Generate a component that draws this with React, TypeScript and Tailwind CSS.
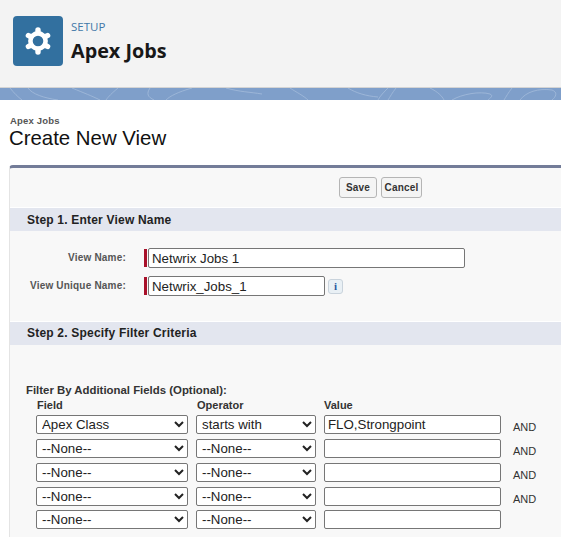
const ARIAL = "font-['Liberation_Sans',Arial,sans-serif]";

const ROWS = [
  { field: "Apex Class", op: "starts with", value: "FLO,Strongpoint", and: true },
  { field: "--None--", op: "--None--", value: "", and: true },
  { field: "--None--", op: "--None--", value: "", and: true },
  { field: "--None--", op: "--None--", value: "", and: true },
  { field: "--None--", op: "--None--", value: "", and: false },
];

function Gear() {
  return (
    <svg width="28" height="30" viewBox="0 0 28 30" fill="none">
      <g stroke="#fff" strokeLinecap="round">
        <circle cx="14" cy="15" r="7.6" strokeWidth="4.6" />
        <path d="M14 4V6.5M14 23.5V26M4.4 9.5L6.6 10.7M23.6 9.5L21.4 10.7M4.4 20.5L6.6 19.3M23.6 20.5L21.4 19.3" strokeWidth="5.4" />
      </g>
    </svg>
  );
}

function BandPattern() {
  return (
    <svg className="absolute inset-0 h-full w-full" viewBox="0 0 561 12" preserveAspectRatio="none" fill="none" stroke="#a3bbdb" strokeWidth="0.8">
      <path d="M10 0C14 5 18 9 22 12M28 0C32 6 44 10 58 12M72 0C84 5 92 8 100 12M118 0C112 5 108 9 106 12M150 0C146 6 148 9 154 12M192 0C178 4 170 8 166 12M226 0C240 4 250 4 262 6M290 0C296 4 304 8 308 12" />
      <path d="M348 0C356 5 366 8 378 9M388 0C384 4 380 8 378 12M396 0C392 5 390 9 388 12M430 0C438 4 442 8 444 12M452 12C462 6 480 3 490 6C494 8 490 10 488 12M512 0C508 5 506 9 504 12M520 12C526 4 538 0 552 2C558 4 556 9 552 12" />
    </svg>
  );
}

function SectionBar({ children, leading }: { children: string; leading: string }) {
  return (
    <div className={`h-[23px] border-t border-white bg-[#e3e6ef] box-content pl-[17px] text-[12px] font-bold ${leading} tracking-[0.2px] text-[#222]`}>
      {children}
    </div>
  );
}

function NameRow({ label, value, width }: { label: string; value: string; width: string }) {
  return (
    <div className="flex h-5 items-center">
      <label className="mb-[2px] w-[116px] text-right text-[10px] font-bold tracking-[0.2px] text-[#555]">{label}</label>
      <span className="ml-[18px] h-[18px] w-[3px] bg-[#a8112a]" />
      <input
        readOnly
        value={value}
        className={`ml-px h-5 ${width} rounded-[2px] border border-[#767676] bg-white px-[3px] text-[13.3px] text-[#222] outline-none`}
      />
    </div>
  );
}

function Dropdown({ value, width }: { value: string; width: string }) {
  return (
    <select
      defaultValue={value}
      className={`h-[19px] ${width} rounded-[2px] border border-[#767676] bg-white pl-px text-[13.3px] leading-none text-[#222] outline-none`}
    >
      <option>{value}</option>
    </select>
  );
}

export default function App() {
  return (
    <div className={`h-[537px] w-[561px] overflow-hidden bg-white ${ARIAL}`}>
      <header className="flex h-[88px] items-start border-b border-[#d4d4d4] bg-[#f3f3f3] pl-[13px] pt-4">
        <div className="flex h-[50px] w-[50px] items-center justify-center rounded-[4px] bg-[#32709f]">
          <Gear />
        </div>
        <div className="ml-2 font-['Open_Sans',sans-serif]">
          <div className="pt-px text-[11.5px] leading-[20px] text-[#3f78a8]">SETUP</div>
          <div className="text-[19.8px] font-bold leading-[27px] text-[#181818]">Apex Jobs</div>
        </div>
      </header>

      <div className="relative h-3 bg-[#7f9fca]">
        <BandPattern />
      </div>

      <div className="pl-[9px] pt-[15px]">
        <div className="pl-px text-[9.5px] font-bold leading-[12px] tracking-[0.2px] text-[#555]">Apex Jobs</div>
        <h1 className="text-[20.4px] leading-[22px] text-[#111]">Create New View</h1>

        <section className="mt-4 h-[400px] rounded-tl-[4px] border-t-[3px] border-l border-t-[#737c98] border-l-[#e4e4e4] bg-[#f8f8f8]">
          <div className="flex h-[39px] items-start pl-[329px] pt-[9px]">
            <button className="h-[21px] w-[38px] rounded-[3px] border border-[#b5b5b5] bg-[#f4f4f4] text-[10px] font-bold tracking-[0.2px] text-[#333]">Save</button>
            <button className="ml-[4px] h-[21px] w-[41px] rounded-[3px] border border-[#b5b5b5] bg-[#f4f4f4] text-[10px] font-bold tracking-[0.2px] text-[#333]">Cancel</button>
          </div>

          <SectionBar leading="leading-[24px]">Step 1. Enter View Name</SectionBar>

          <div className="flex h-[90px] flex-col gap-2 pt-[17px]">
            <NameRow label="View Name:" value="Netwrix Jobs 1" width="w-[317px]" />
            <div className="flex items-center">
              <NameRow label="View Unique Name:" value="Netwrix_Jobs_1" width="w-[177px]" />
              <span className="ml-[3px] mt-px flex h-[15px] w-[15px] items-center justify-center rounded-[3px] border border-[#c9d3dc] bg-[#e9f0f5] font-['Liberation_Serif',serif] text-[11px] font-bold text-[#2a5a9e]">i</span>
            </div>
          </div>

          <SectionBar leading="leading-[22px]">Step 2. Specify Filter Criteria</SectionBar>

          <div className="pl-4 pt-[39px]">
            <div className="text-[11.4px] font-bold leading-[13px] text-[#333]">Filter By Additional Fields (Optional):</div>
            <div className="mt-px grid grid-cols-[160px_128px_176px_auto] pl-[10px] text-[11px] font-bold leading-[14px] text-[#333]">
              <span className="pl-px">Field</span>
              <span className="pl-px">Operator</span>
              <span>Value</span>
              <span />
            </div>
            <div className="mt-[2px] flex flex-col gap-[5px] pl-[10px]">
              {ROWS.map((row, i) => (
                <div key={i} className="grid h-[19px] grid-cols-[160px_128px_189px_auto] items-center">
                  <Dropdown value={row.field} width="w-[152px]" />
                  <Dropdown value={row.op} width="w-[120px]" />
                  <input
                    readOnly
                    value={row.value}
                    className="h-[19px] w-[177px] rounded-[2px] border border-[#767676] bg-white px-[3px] text-[13.3px] text-[#222] outline-none"
                  />
                  {row.and && <span className="mt-[5px] text-[11px] text-[#333]">AND</span>}
                </div>
              ))}
            </div>
          </div>
        </section>
      </div>
    </div>
  );
}
